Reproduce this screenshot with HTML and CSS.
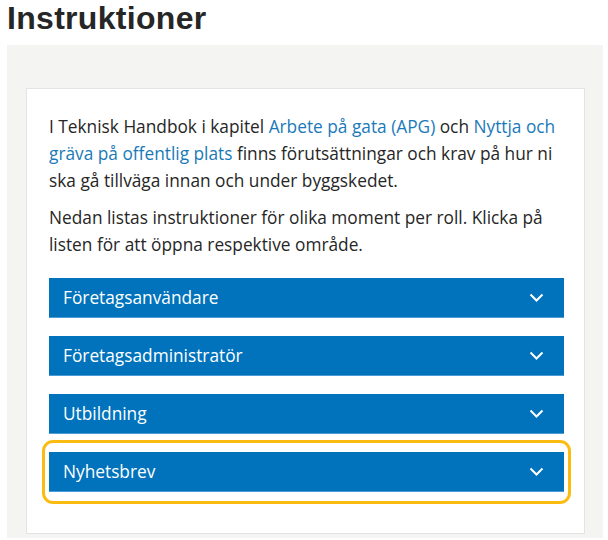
FILE: index.html
```html
<!DOCTYPE html>
<html lang="sv">
<head>
    <meta charset="UTF-8">
    <meta name="viewport" content="width=device-width, initial-scale=1.0">
    <title>Instruktioner</title>
    <link rel="stylesheet" href="styles.css">
</head>
<body>
    <h1 class="page-title">Instruktioner</h1>

    <div class="panel">
        <div class="card">
            <p>I Teknisk Handbok i kapitel <a href="#">Arbete på gata (APG)</a> och <a href="#">Nyttja och gräva på offentlig plats</a> finns förutsättningar och krav på hur ni ska gå tillväga innan och under byggskedet.</p>
            <p>Nedan listas instruktioner för olika moment per roll. Klicka på listen för att öppna respektive område.</p>

            <div class="accordion">
                <button class="acc-item" type="button">
                    <span>Företagsanvändare</span>
                    <svg class="chevron" width="15" height="9" viewBox="0 0 15 9"><path d="M1.5 1.5 L7.5 7.5 L13.5 1.5" fill="none" stroke="#fff" stroke-width="2"/></svg>
                </button>
                <button class="acc-item" type="button">
                    <span>Företagsadministratör</span>
                    <svg class="chevron" width="15" height="9" viewBox="0 0 15 9"><path d="M1.5 1.5 L7.5 7.5 L13.5 1.5" fill="none" stroke="#fff" stroke-width="2"/></svg>
                </button>
                <button class="acc-item" type="button">
                    <span>Utbildning</span>
                    <svg class="chevron" width="15" height="9" viewBox="0 0 15 9"><path d="M1.5 1.5 L7.5 7.5 L13.5 1.5" fill="none" stroke="#fff" stroke-width="2"/></svg>
                </button>
                <button class="acc-item focused" type="button">
                    <span>Nyhetsbrev</span>
                    <svg class="chevron" width="15" height="9" viewBox="0 0 15 9"><path d="M1.5 1.5 L7.5 7.5 L13.5 1.5" fill="none" stroke="#fff" stroke-width="2"/></svg>
                </button>
            </div>
        </div>
    </div>
</body>
</html>
```

FILE: styles.css
```css
body {
    margin: 0;
    padding: 0 5px 0 7px;
    background-color: #fff;
    font-family: "Open Sans", Arial, sans-serif;
    color: #222;
}

.page-title {
    margin: 0;
    height: 45px;
    font-family: "Liberation Sans", Arial, sans-serif;
    font-size: 32px;
    line-height: 36px;
    font-weight: bold;
    color: #262626;
    letter-spacing: 0.3px;
}

.panel {
    background-color: #f4f4f3;
    padding: 43px 18px 4px 19px;
}

.card {
    background-color: #fff;
    border: 1px solid #e4e4e4;
    padding: 24px 20px 41px 22px;
}

.card p {
    margin: 0 0 10px 0;
    font-size: 17.3px;
    line-height: 27px;
    color: #262626;
}

.card a {
    color: #1a7ab8;
    text-decoration: none;
}

.accordion {
    display: flex;
    flex-direction: column;
    gap: 18px;
    margin-top: 20px;
}

.acc-item {
    display: flex;
    justify-content: space-between;
    align-items: center;
    height: 40px;
    padding: 0 20px 0 14px;
    background-color: #0073bc;
    border: none;
    border-bottom: 1px solid #4b9bd4;
    color: #fff;
    font-family: "Open Sans", Arial, sans-serif;
    font-size: 17.3px;
    cursor: pointer;
    text-align: left;
}

.focused {
    position: relative;
}

.focused::after {
    content: "";
    position: absolute;
    top: -12px;
    bottom: -13px;
    left: -7px;
    right: -7px;
    border: 3px solid #fbbb10;
    border-radius: 11px;
}
```
